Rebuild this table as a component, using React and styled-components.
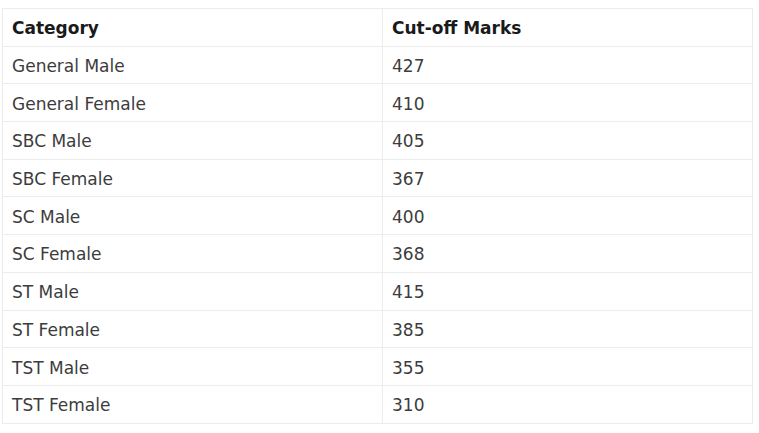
import React from "react";
import styled, { createGlobalStyle } from "styled-components";

const GlobalStyle = createGlobalStyle`
  body {
    margin: 0;
    background: #ffffff;
  }
`

const Page = styled.div`
  padding: 8px 6px 0 2px;
  font-family: "DejaVu Sans", Verdana, sans-serif;
`

const Table = styled.table`
  width: 751px;
  border-collapse: collapse;
  table-layout: fixed;
`

const Row = styled.tr`
  height: 37.7px;
`

const Cell = styled.td`
  border: 1px solid #ececec;
  padding: 2px 9px 0;
  font-size: 17px;
  color: ${(p) => (p.head ? "#1a1a1a" : "#3c3c3c")};
  font-weight: ${(p) => (p.head ? "bold" : "normal")};
  vertical-align: middle;
  text-align: left;
  width: ${(p) => (p.first ? "361px" : "auto")};
`

const rows = [
  ["General Male", "427"],
  ["General Female", "410"],
  ["SBC Male", "405"],
  ["SBC Female", "367"],
  ["SC Male", "400"],
  ["SC Female", "368"],
  ["ST Male", "415"],
  ["ST Female", "385"],
  ["TST Male", "355"],
  ["TST Female", "310"],
]

export default function App() {
  return <>
    <GlobalStyle />
    <Page>
      <Table>
        <tbody>
          <Row>
            <Cell as="th" head first>Category</Cell>
            <Cell as="th" head>Cut-off Marks</Cell>
          </Row>
          {rows.map(([name, marks]) =>
            <Row key={name}>
              <Cell first>{name}</Cell>
              <Cell>{marks}</Cell>
            </Row>
          )}
        </tbody>
      </Table>
    </Page>
  </>
}
